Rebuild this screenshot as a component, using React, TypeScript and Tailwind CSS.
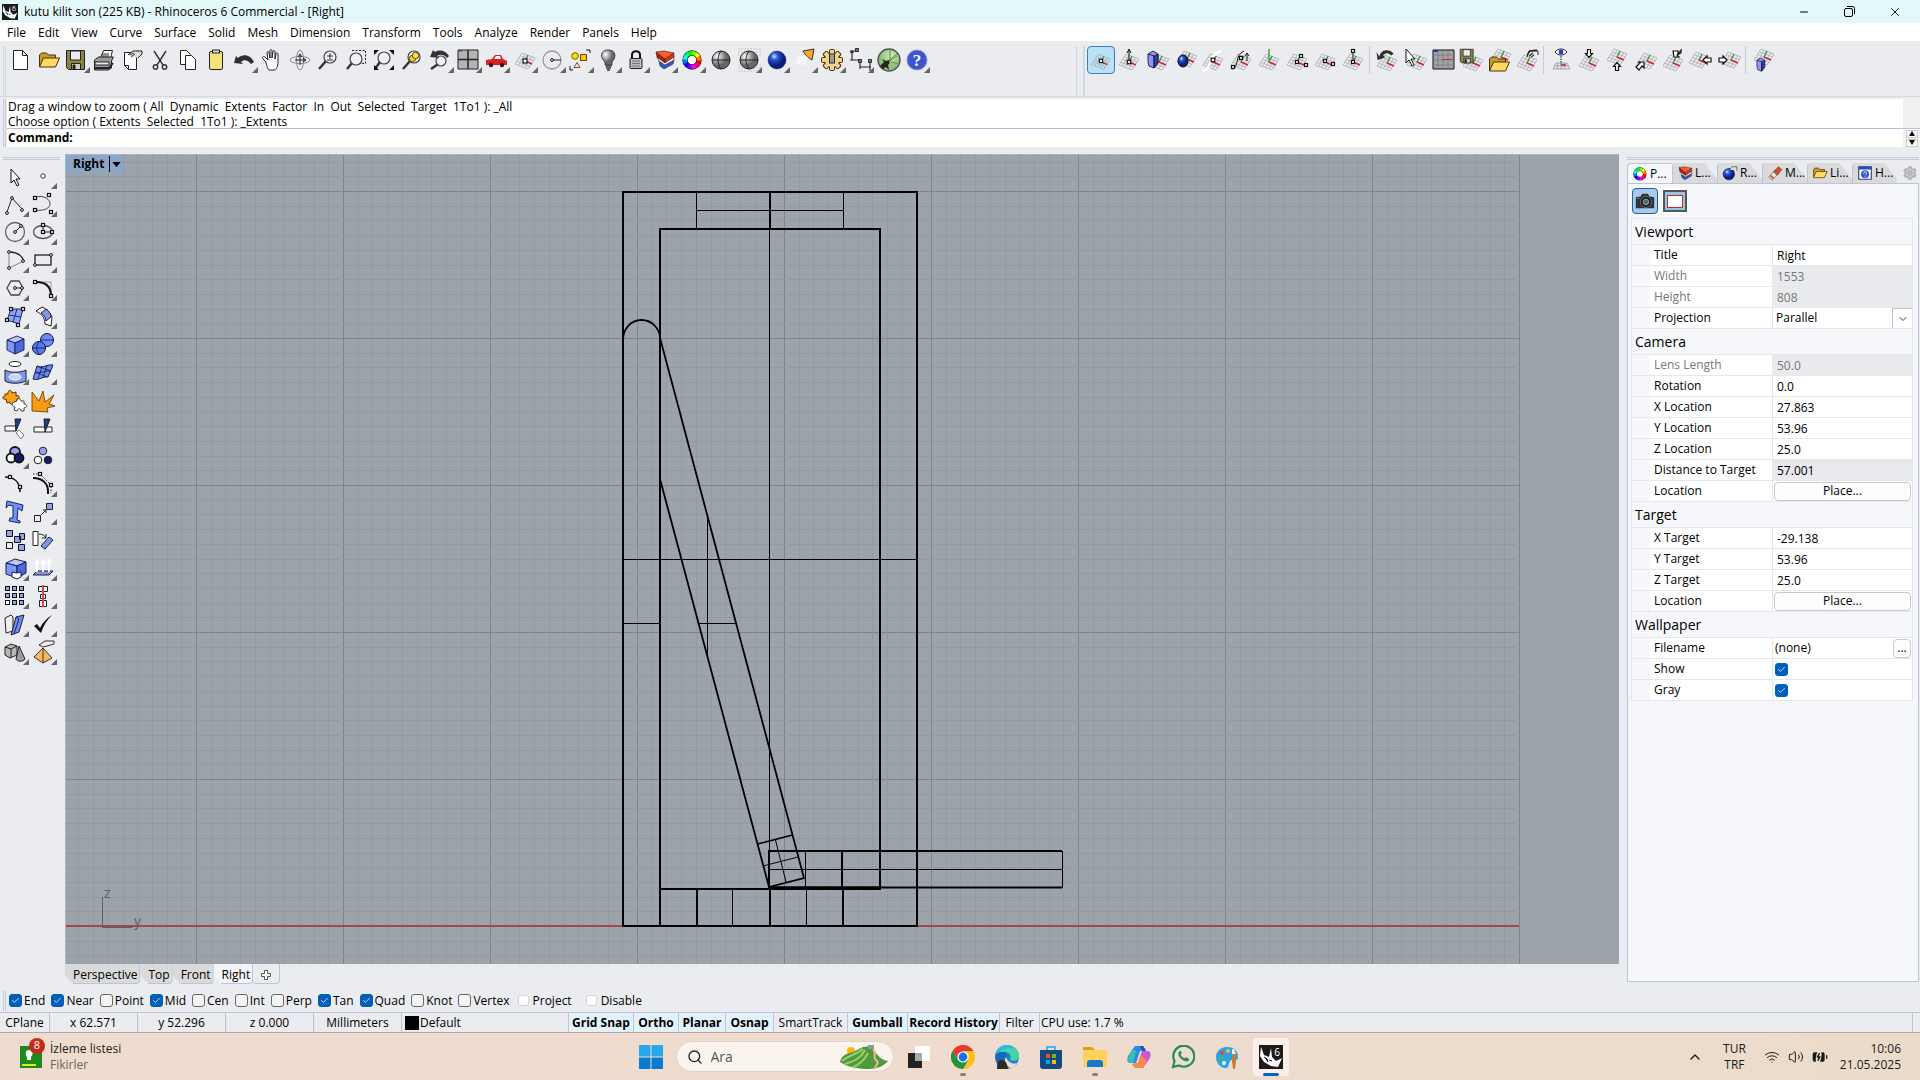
// App.tsx
import type { ReactNode } from 'react'
import { BatteryCharging, Check, ChevronDown, ChevronUp, Minus, Search, Settings, Volume2, Wifi, X } from 'lucide-react'

const menus = [
  'File', 'Edit', 'View', 'Curve', 'Surface', 'Solid', 'Mesh', 'Dimension',
  'Transform', 'Tools', 'Analyze', 'Render', 'Panels', 'Help',
]

/* ---------- shared icon parts (28 x 28 box) ---------- */

function Plane({ dx = 0, dy = 0 }: { dx?: number; dy?: number }) {
  const steps = [0, 1, 2, 3, 4]
  return (
    <g transform={`translate(${dx} ${dy})`}>
      {steps.map((i) => (
        <g key={i} stroke="#a9abb0" strokeWidth="0.8">
          <path d={`M${4 + i * 1.75} ${19 - i * 2.75}l13 5`} />
          <path d={`M${4 + i * 3.25} ${19 + i * 1.25}l7 -11`} />
        </g>
      ))}
      <path d="M14 16l3-6" stroke="#3f9a3f" strokeWidth="1.4" />
      <path d="M14 16l7 3" stroke="#cc2233" strokeWidth="1.6" />
    </g>
  )
}

function Node({ x, y, s = 4 }: { x: number; y: number; s?: number }) {
  return <rect x={x - s / 2} y={y - s / 2} width={s} height={s} fill="#fff" stroke="#111" strokeWidth="1.2" />
}

function Dot({ x, y }: { x: number; y: number }) {
  return <circle cx={x} cy={y} r="1.4" fill="#fff" stroke="#111" strokeWidth="1" />
}

function Wheel({ r = 8 }: { r?: number }) {
  const c = 2 * Math.PI * r
  return (
    <g>
      <circle cx="14" cy="14" r={r} stroke="#222" strokeWidth="5.4" fill="#fff" />
      {Array.from({ length: 12 }, (_, i) => (
        <circle
          key={i}
          cx="14"
          cy="14"
          r={r}
          fill="none"
          stroke={`hsl(${i * 30} 100% 50%)`}
          strokeWidth="4"
          strokeDasharray={`${c / 12 + 0.3} ${c}`}
          transform={`rotate(${-i * 30} 14 14)`}
        />
      ))}
    </g>
  )
}

function Lens({ x = 16, y = 11, r = 6 }: { x?: number; y?: number; r?: number }) {
  return (
    <g>
      <path d={`M${x - r * 0.7} ${y + r * 0.7}L5 23`} stroke="#333" strokeWidth="2.4" />
      <circle cx={x} cy={y} r={r} fill="#f1f2f5" stroke="#444" strokeWidth="1.2" />
    </g>
  )
}

const folder = (
  <g stroke="#4a3200" strokeWidth="1">
    <path d="M5.500 20V9l2-2h5l2 2h7v3" fill="#c99a2a" />
    <path d="M5.500 21l4-9h16l-4 9z" fill="#ffd866" />
  </g>
)
const floppy = (
  <g stroke="#222">
    <path d="M4.500 4.500h18v19h-16l-2-2z" fill="#8d8440" />
    <path d="M8.500 5h10v9h-10z" fill="#e9ebf3" />
    <path d="M9.500 17.500h9v6h-9z" fill="#cfcfcf" />
    <path d="M11 19h2v4h-2z" fill="#222" />
  </g>
)
const layers = (
  <g stroke="#222" strokeWidth="0.6">
    <path d="M9 15l6 4 9-5-1 4-9 5-4-3z" fill="#3557c9" />
    <path d="M7 11l8 5 9-5v3l-9 5-6-4z" fill="#fff" />
    <path d="M6 6l9 7v4l-8-6z" fill="#b81a0c" />
    <path d="M15 13l9-6v4l-9 6z" fill="#e03418" />
    <path d="M6 6l8-1 10 2-9 6z" fill="#ff5a28" />
  </g>
)
const undo = <path d="M7 16C9 8 18 7 23 13l-3 2C17 11 13 12 11 15l3 2-9 3-1-9z" fill="#2f2f2f" />
const hand = <path d="M14 9l3-4 7-1M16 10l4-3M18 11l3-2" stroke="#333" strokeWidth="1.4" />
const cube = (
  <g stroke="#101c60" strokeWidth="0.9">
    <path d="M6 10l10-4 7 3-9 4z" fill="#b9c6fa" />
    <path d="M6 10l8 3v11l-8-4z" fill="#7f97f2" />
    <path d="M14 13l9-4v11l-9 4z" fill="#4c68dd" />
  </g>
)
const prism = (
  <g stroke="#15194a" strokeWidth="0.9">
    <path d="M5 8l5-3 5 3v9l-4 5-5-2-1-4z" fill="#8f97ee" />
    <path d="M11 10l4-2v9l-4 5z" fill="#3a3fa8" />
    <path d="M5 8l6 2v12" />
  </g>
)
const gear = (
  <g>
    {[0, 45, 90, 135].map((a) => (
      <rect key={a} x="11.500" y="3.500" width="5" height="21" rx="1" fill="#f0d48c" stroke="#3c2b08" transform={`rotate(${a} 14 14)`} />
    ))}
    <circle cx="14" cy="14" r="7" fill="#f0d48c" />
    <rect x="11.500" y="8" width="5" height="9" fill="#9a9a9a" stroke="#3c2b08" />
  </g>
)
const arrow = (d: string) => <path d={d} fill="#fff" stroke="#111" strokeWidth="1.2" />

const icons: Record<string, ReactNode> = {
  New: <path d="M7.500 4.500h9l5 5v14h-14zM16.500 4.500v5h5" fill="#fff" stroke="#222" />,
  Open: folder,
  Save: floppy,
  Print: (
    <g stroke="#222">
      <path d="M10.500 12l3-7.500h9l-2 7.500" fill="#fff" />
      <path d="M12 8h7M12 10h7" />
      <path d="M4.500 14l4-3h15l-2 4v7l-3 2h-14z" fill="#9c9c9c" />
      <path d="M5 16h14v3H5z" fill="#eee" />
      <path d="M5 22h14l4-5" strokeWidth="2" />
    </g>
  ),
  'Document properties': (
    <g>
      <path d="M6.500 6.500h12v17h-8l-4-4zM6.500 19.500h4v4" fill="#fff" stroke="#222" />
      <path d="M10 9l5-4h9v3l-4 4" fill="#ddd" stroke="#222" />
      <path d="M12 9l4-2M13 11l4-3" stroke="#333" />
    </g>
  ),
  Cut: (
    <g stroke="#333" strokeWidth="1.4">
      <path d="M8 5l9 14M20 5l-9 14" />
      <circle cx="9.500" cy="21" r="2.200" />
      <circle cx="18.500" cy="21" r="2.200" />
    </g>
  ),
  Copy: (
    <g fill="#fff" stroke="#222">
      <path d="M6.500 4.500h6l4 4v10h-10z" />
      <path d="M11.500 9.500h6l4 4v10h-10z" />
    </g>
  ),
  Paste: (
    <g stroke="#222">
      <rect x="7.500" y="5.500" width="13" height="18" rx="1.500" fill="#f5e27a" />
      <rect x="10.500" y="4" width="7" height="3" fill="#ddd" />
    </g>
  ),
  Undo: <path d="M4 17l2-7 2 2c5-5 13-3 16 4l-3 2c-3-4-7-5-10-2l2 2z" fill="#2f2f2f" />,
  Pan: <path d="M8 16l-3-3c-2-2 1-3 2-2l3 3-1-7c0-2 2-2 2 0l1 5V5c0-2 2-2 2 0v7l1-6c0-2 2-2 2 0v7l1-5c0-2 2-1 2 0v8c0 4-2 8-3 8h-6c-1 0-2-4-3-7z" fill="#fff" stroke="#222" />,
  'Rotate view': (
    <g stroke="#8a8a8a">
      <ellipse cx="14" cy="14" rx="10" ry="3.500" />
      <ellipse cx="14" cy="14" rx="3.500" ry="10" />
      <path d="M14 9v10M9 14h10M12 11l2-3 2 3M17 12l3 2-3 2" stroke="#222" />
    </g>
  ),
  'Zoom dynamic': <g><Lens /><path d="M13 10h6M16 7v6M13 14h6" stroke="#333" /></g>,
  'Zoom window': <g><Lens x={14} y={13} r={6} /><path d="M10 4.500h13.500v13H18" stroke="#222" strokeDasharray="2 1.500" /></g>,
  'Zoom extents': (
    <g>
      <Lens x={14} y={12} />
      <path d="M4 4h5L4 9zM24 4h-5l5 5zM24 24h-5l5-5zM4 24v-5l5 5z" fill="#111" />
    </g>
  ),
  'Zoom selected': <g><Lens /><circle cx="14.500" cy="12.500" r="3.200" fill="#f5d21f" stroke="#5d4a00" /><circle cx="17.500" cy="9.500" r="3.200" fill="#f9e04a" stroke="#5d4a00" /></g>,
  'Undo view': <g><Lens x={15} y={15} r={5} /><path d="M4 11l3-7 2 2c5-3 11-1 14 4l-2 2c-3-4-7-4-10-2l2 2z" fill="#333" /></g>,
  'Four viewports': (
    <g>
      <path d="M4 4h20v19H4z" fill="#b4b4b6" stroke="#222" />
      <path d="M14 4v19M4 13.500h20" stroke="#222" strokeWidth="1.500" />
      <path d="M5 5h3" stroke="#2233aa" />
    </g>
  ),
  'Set view': (
    <g>
      <path d="M4 14l6-1 3-4h6l2 4 4 2v4H4z" fill="#dd1d22" />
      <path d="M12 13l2-3h4l1 3z" fill="#fff" />
      <circle cx="9" cy="19" r="2.200" fill="#222" />
      <circle cx="20" cy="19" r="2.200" fill="#222" />
    </g>
  ),
  'Set CPlane': <g><Plane dx={1} dy={-1} /><Node x={15} y={15} /></g>,
  'Object snap': (
    <g>
      <circle cx="14" cy="14" r="9" stroke="#999" strokeWidth="1.300" />
      <path d="M14 14h9" stroke="#222" />
      <Dot x={14} y={14} />
    </g>
  ),
  Select: (
    <g>
      <circle cx="9" cy="10" r="3.300" fill="#fbe100" stroke="#8a5a00" />
      <path d="M14.500 8.500h6v6h-6z" fill="#fbc900" stroke="#7a3d00" />
      <path d="M8 21.500l3-5 3 5z" stroke="#8a4a22" />
      <path d="M20 4h4v3M4 20v4h3" stroke="#111" />
    </g>
  ),
  Hide: (
    <g>
      <path d="M14 4c9 0 8 8 4 12v3h-7v-3c-5-4-5-12 3-12z" fill="url(#gray)" stroke="#444" />
      <path d="M11.500 20h6M12 22h5M13 24h3" stroke="#333" strokeWidth="1.300" />
    </g>
  ),
  Lock: (
    <g>
      <path d="M10 13V9c0-5 8-5 8 0v4" stroke="#111" strokeWidth="2" />
      <rect x="8" y="12.500" width="12" height="10" rx="1" fill="#bbb" stroke="#222" />
      <path d="M10 15h8M10 17.500h8M10 20h8" stroke="#777" />
    </g>
  ),
  Layers: layers,
  Properties: <Wheel r={7} />,
  Shade: <g><circle cx="15" cy="14" r="9" fill="url(#gray)" stroke="#222" /><path d="M6 14h18M15 5c-4 5-4 13 0 18" stroke="#222" /></g>,
  'Shade selected': (
    <g>
      <path d="M4 3h23M4 6h23M4 9h23M4 19h23M4 22h23M4 25h23" stroke="#c4c5ca" strokeDasharray="2 1" />
      <circle cx="15" cy="14" r="9" fill="url(#gray)" stroke="#222" />
      <path d="M6 14h18M15 5c-4 5-4 13 0 18" stroke="#222" />
    </g>
  ),
  Render: <g><circle cx="15" cy="14" r="9" fill="url(#blue)" stroke="#0a1a60" strokeWidth="0.500" /></g>,
  Lights: <g><path d="M5 17l5-10 8 4-2 9z" fill="#fff" opacity="0.500" /><path d="M13 5l11-2-2 11c-2-1-7-5-9-9z" fill="#f8a630" stroke="#333" /></g>,
  Options: gear,
  Dimension: (
    <g stroke="#222" strokeWidth="1.100">
      <path d="M6 5v9M4 5h8M4 14h10v9M14 21h11M24 16v9M4.500 7L6 5l1.500 2" />
      <Node x={11} y={4} s={2.500} /><Node x={14} y={15} s={2.500} /><Node x={24} y={15} s={2.500} />
    </g>
  ),
  Grasshopper: (
    <g>
      <circle cx="15" cy="14" r="11" fill="url(#green)" stroke="#555" strokeWidth="1.400" />
      <path d="M6 20l4-4-2-3 4 2 3-1 1 3-2 2 1 5-3-3-3 2z" fill="#222" />
      <path d="M15 15l8-5M15 17c3-6 5-8 10-9M16 14V4M17 16l8 2" stroke="#5f8f4a" />
    </g>
  ),
  Help: (
    <g>
      <circle cx="15" cy="14" r="10" fill="#3a55cf" stroke="#8592c8" />
      <text x="15" y="20" textAnchor="middle" fontSize="17" fontWeight="700" fill="#fff" fontFamily="Liberation Serif, serif">?</text>
    </g>
  ),

  // CPlane toolbar
  'Origin': <g><Plane /><Node x={14} y={15} s={3.500} /></g>,
  'Elevation': <g><Plane /><path d="M14 15V4M12 7l2-4 2 4" stroke="#111" /><Node x={14} y={16} s={3.500} /></g>,
  'To object': <g><Plane dx={2} />{prism}</g>,
  'To surface': <g><Plane dx={2} dy={-3} /><ellipse cx="12" cy="15" rx="5" ry="6" fill="url(#blue)" stroke="#111" /></g>,
  'Perpendicular to curve': <g><Plane /><path d="M4 25c10-3 5-17 18-20" stroke="#fff" strokeWidth="2.500" /><Node x={14} y={14} s={3.500} /></g>,
  'To curve': <g><Plane /><path d="M5 23c8-2 2-14 12-18M20 15V7M18 10l2-3 2 3" stroke="#222" /><Node x={14} y={12} s={3} /><Node x={6} y={21} s={3} /></g>,
  'Z axis': <g><Plane /><path d="M14 16V3" stroke="#35b035" strokeWidth="1.500" /></g>,
  '3 points': <g><Plane /><Node x={14} y={16} s={3} /><Node x={18} y={10} s={3} /><Node x={23} y={19} s={3} /></g>,
  'X axis': <g><Plane /><Node x={14} y={15} s={3} /><Node x={22} y={18} s={3} /></g>,
  'Vertical': <g><Plane /><path d="M14 15V6" stroke="#222" /><Node x={14} y={5} s={3} /><Node x={14} y={16} s={3} /></g>,
  'Previous CPlane': <g><Plane dy={1} /><g transform="translate(0 -4) scale(.9)">{undo}</g></g>,
  'Select CPlane': <g><Plane dx={2} /><path d="M5 3v14l3-3 3 6 2-1-3-6h4z" fill="#fff" stroke="#111" /></g>,
  'Match view': (
    <g>
      <path d="M4 4h21v19H4z" fill="#a4a4a8" stroke="#111" />
      <path d="M9 4v19M14 4v19M19 4v19M4 9h21M4 14h21M4 19h21" stroke="#77777c" strokeWidth="0.700" />
      <path d="M13 13.500h11" stroke="#d03040" /><path d="M5 5h4" stroke="#2233cc" strokeWidth="2" />
    </g>
  ),
  'Save CPlane': <g><Plane dx={2} dy={1} /><g transform="scale(.72)">{floppy}</g></g>,
  'Read CPlane': <g><Plane dx={2} dy={-5} /><g transform="translate(-1 4)">{folder}</g></g>,
  'Edit CPlane': <g><Plane dy={1} />{hand}<path d="M14 11l2-6h9v4" stroke="#222" fill="none" /></g>,
  'Plan view': (
    <g>
      <path d="M8 6c3-4 9-4 12 0-3 4-9 4-12 0z" fill="#fff" stroke="#222" /><circle cx="14" cy="6" r="2.400" fill="#2340cc" />
      <path d="M14 10v6" stroke="#222" strokeDasharray="1.500 1" />
      <path d="M6 23h17M7 20h15M9 17h11M9 17l-3 6M14 17v6M20 17l3 6M11 17l-1 6M17 17l1 6" stroke="#a0a2a8" />
      <path d="M14 19h5" stroke="#cc2233" strokeWidth="1.500" /><path d="M14 19v-4" stroke="#3f9a3f" />
    </g>
  ),
  Top: <g><Plane dy={1} />{arrow('M12.500 3.500h3v4h2l-3.500 4-3.500-4h2z')}</g>,
  Bottom: <g><Plane dy={-5} />{arrow('M12.500 24.500h3v-4h2l-3.500-4-3.500 4h2z')}</g>,
  Front: <g><Plane dx={2} dy={-1} />{arrow('M5 21l4-4-2-1h6v6l-2-2-3 4z')}</g>,
  Back: <g><Plane dy={1} />{arrow('M22 4l-3 4 0-3h-5l1 6 5 0-2-2 4-2z')}</g>,
  'Right CPlane': <g><Plane dx={-2} dy={-2} />{arrow('M24 12v4h-4v2l-4-4 4-4v2z')}</g>,
  'Left CPlane': <g><Plane dx={2} dy={-2} />{arrow('M4 12v4h4v2l4-4-4-4v2z')}</g>,
  Mobile: <g><Plane dx={1} dy={-5} /><g transform="translate(4 8) scale(.78)">{prism}</g></g>,

  // main left toolbar
  Pointer: <path d="M10 7v14l3-3 3 6 2-1-3-6h4z" fill="#fff" stroke="#111" />,
  Point: <circle cx="14" cy="14" r="2.200" fill="#fff" stroke="#333" />,
  Polyline: <g><path d="M6 22l5-14 10 11" stroke="#222" /><Dot x={6} y={23} /><Dot x={11} y={8} /><Dot x={21} y={20} /></g>,
  Curve: <g><path d="M6 7c18-4 22 16 0 13" stroke="#444" /><Node x={6} y={8} s={3} /><Node x={6} y={20} s={3} /><Node x={20} y={5} s={3} /><Node x={22} y={22} s={3} /></g>,
  Circle: <g><circle cx="14" cy="14" r="9.500" stroke="#666" strokeWidth="1.300" /><path d="M14 14l6-6" stroke="#222" /><Dot x={14} y={14} /><Dot x={20} y={8} /></g>,
  Ellipse: <g><ellipse cx="14" cy="14" rx="9.500" ry="6.500" stroke="#555" strokeWidth="1.300" /><path d="M14 8v6h9" stroke="#222" /><Node x={14} y={7} s={3} /><Node x={14} y={14} s={3} /><Node x={23} y={14} s={3} /></g>,
  Arc: <g><path d="M8 6c8 0 13 4 15 9" stroke="#222" strokeWidth="1.300" /><path d="M8 6v16l15-7" stroke="#888" /><Dot x={8} y={6} /><Dot x={8} y={22} /><Dot x={22} y={15} /></g>,
  Rectangle: <g><rect x="6" y="9" width="16" height="10" stroke="#222" strokeWidth="1.300" /><Dot x={6} y={19} /><Dot x={22} y={9} /></g>,
  Polygon: <g><path d="M6 14l4-7h8l4 7-4 7h-8z" stroke="#444" strokeWidth="1.300" /><path d="M14 14h7" stroke="#222" /><Dot x={14} y={14} /><Dot x={21} y={14} /></g>,
  Fillet: <g><path d="M6 8h16v14" stroke="#999" /><path d="M7 8c10 0 15 4 15 14" stroke="#111" strokeWidth="2" /><Node x={6} y={8} s={3} /><Node x={22} y={22} s={3} /></g>,
  Surface: (
    <g>
      <path d="M10 7h12l-4 15-12-4z" fill="#8ea3f2" stroke="#1a2a80" />
      <path d="M16 7l-4 13M8 13l12 2" stroke="#1a2a80" />
      <Node x={10} y={7} s={3} /><Node x={22} y={7} s={3} /><Node x={6} y={18} s={3} /><Node x={17} y={23} s={3} />
    </g>
  ),
  'Surface from curves': (
    <g>
      <path d="M7 9l6-4c5 2 8 5 10 10l-1 9-6-2c0-6-3-10-9-13z" fill="#fff" stroke="#222" />
      <path d="M12 11l5-4c3 2 5 5 5 8l-5 4c0-3-2-6-5-8z" fill="#7f97f2" stroke="#222" />
    </g>
  ),
  Box: cube,
  Sphere: <g stroke="#0c1850"><circle cx="18" cy="10" r="6.500" fill="#6f8cf5" /><circle cx="10" cy="18" r="6.500" fill="#5a78ea" /><path d="M4 18h13M10 12c-3 3-3 9 0 12M12 10h12" strokeWidth="0.800" /></g>,
  'Extract surface': (
    <g stroke="#222">
      <ellipse cx="14" cy="6" rx="6" ry="2.500" fill="#fff" />
      <path d="M4 12c5 3 15 3 21 0v11c-6 3-16 3-21 0z" fill="#7f97f2" />
      <ellipse cx="14" cy="19" rx="6" ry="3" fill="#c6d2ff" stroke="#fff" />
    </g>
  ),
  Mesh: <g stroke="#101c60"><path d="M8 8c5 3 10-2 16-1l-5 12c-5-1-9 4-15 2z" fill="#6f8be8" /><path d="M6 14c6 2 10-2 16-1M13 8l-4 13M18 7l-4 13M8 8l14 5M6 14l12 5" strokeWidth="0.800" /></g>,
  Join: (
    <g>
      <path d="M4 8l3 0c-1-4 4-5 4-1l4-1 0 4c4-2 4 3 1 3l0 3-3 0c0 3-5 3-4 0l-3 1-1-4c-4 1-4-3-1-3z" fill="#f6a21a" stroke="#5a3500" />
      <path d="M13 16l3-1c-1-3 4-3 4 0l3 0 0 3c4 0 3 4 0 4l0 3-3 0c0-3-4-3-4 0l-3-1 1-3c-3 0-4-4-1-5z" fill="#fff" stroke="#444" />
    </g>
  ),
  Explode: <path d="M3 25V6l7 9 4-10 2 11 9-7-5 9 6 2-8 2 1 4z" fill="#f79a14" stroke="#5a3500" strokeWidth="0.800" />,
  Trim: <g stroke="#222"><path d="M4 12h11v5H4z" fill="#fff" /><path d="M15 19l3-3 5 5-3 4z" fill="#fff" stroke="#777" /><path d="M14 5h6l-5 12z" fill="#1f3c8e" /></g>,
  Split: <g stroke="#222"><path d="M5 13h18v5H5z" fill="#fff" /><path d="M15 5h6l-5 13z" fill="#1f3c8e" /></g>,
  Group: <g stroke="#111" strokeWidth="1.800"><circle cx="14" cy="10" r="5" fill="#9aa0ef" /><circle cx="10" cy="16" r="4.500" fill="#fff" /><circle cx="18" cy="16" r="4.500" fill="#17186e" /></g>,
  Ungroup: <g stroke="#222"><circle cx="14" cy="9" r="3.800" fill="#9aa0ef" /><circle cx="9" cy="18" r="3.800" fill="#fff" /><circle cx="19" cy="18" r="3.800" fill="#17186e" /></g>,
  'Edit points': <g><path d="M4 7c9 0 15 5 15 15" stroke="#111" strokeWidth="1.600" /><Node x={9} y={7} s={3} /><Node x={19} y={17} s={3} /></g>,
  'Control points': <g><path d="M4 8c9 0 16 5 15 16" stroke="#111" strokeWidth="2" /><path d="M4 4h7l11 11v8" stroke="#222" strokeDasharray="1.500 1.500" /><Node x={11} y={4} s={3} /><Node x={22} y={15} s={3} /></g>,
  Text: <path d="M6 3l16 4-1 6-4-3-1 12 3 1v2l-11-2 1-3 3 0v-12l-4-1-3 3z" fill="#7290f4" stroke="#14246e" />,
  Move: <g stroke="#222"><path d="M5.500 17.500h6v6h-6z" fill="#eee" /><path d="M17.500 5.500h6v6h-6z" fill="#8ea3f2" /><path d="M12 17l5-5M14 12h3v3" /></g>,
  Copies: <g stroke="#111"><path d="M5.500 4.500h6v6h-6zM18.500 7.500h5v6h-5zM13.500 10.500h6v6h-6zM17.500 18.500h6v6h-6z" fill="#8ea3f2" /><path d="M5.500 16.500h6v6h-6z" fill="#eee" /></g>,
  Rotate: <g stroke="#222"><path d="M4 5.500h5v14H4z" fill="#fff" /><path d="M12 20l8-9 4 3-8 9z" fill="#7f97f2" /><path d="M10 8c4 0 6 2 7 4M17 8v4h-4" /></g>,
  'Solid edit': <g stroke="#101c60"><path d="M5 9l9-4 11 3-9 4z" fill="#b9c6fa" /><path d="M5 9l11 3v12L5 20z" fill="#7f97f2" /><path d="M16 12l9-4v11l-9 5z" fill="#4c68dd" /><path d="M11 18l5 1 4-1v5l-4 2-5-2z" fill="#fff" /></g>,
  Extrude: <g><path d="M4 21l4-4h16l-4 4z" fill="#7f97f2" stroke="#222" /><path d="M8 18V8M14 18V8M20 18V8M6 10l2-4 2 4M12 10l2-4 2 4M18 10l2-4 2 4" stroke="#fff" strokeWidth="1.800" /></g>,
  Array: (
    <g stroke="#111">
      {[4.5, 11.5, 18.5].map((y) => [4.5, 11.5, 18.5].map((x) => <rect key={`${x}-${y}`} x={x} y={y} width="4" height="4" fill={y > 18 && x < 5 ? '#fff' : '#8ea3f2'} />))}
    </g>
  ),
  Align: <g stroke="#222"><path d="M9.500 4.500h9v5h-9zM11.500 12.500h5v4h-5zM10.500 18.500h7v6h-7z" fill="#fff" /><path d="M14 3v22" stroke="#d8474f" strokeWidth="2" /></g>,
  'Set points': <g stroke="#222"><path d="M4 8l6-3 2 2v14l-7 2z" fill="#eee" /><path d="M15 7l8-2-5 17-8 3z" fill="#6f8cf5" /><path d="M15 7l3 2-5 15" stroke="#14246e" /></g>,
  Check: <path d="M5 16l3-2 3 4c3-6 7-10 12-13-5 5-9 11-11 18z" fill="#111" />,
  Primitives: <g stroke="#222"><path d="M4 9l6-3 6 2v9l-7 3-5-3z" fill="#b7b7b7" /><path d="M4 9l6 2 6-3M10 11v9" /><path d="M18 8l6 13c-2 3-8 3-9 0z" fill="#9d9d9d" /></g>,
  Analyze: <g stroke="#333"><path d="M14 10l9 10-9 5-9-6z" fill="#f4b95a" /><path d="M14 10v15" /><path d="M10 7l6-4h9v3l-7 2-4 1z" fill="#eee" /></g>,
}

const standardTools: [string, boolean][] = [
  ['New', false], ['Open', false], ['Save', true], ['Print', false], ['Document properties', false],
  ['Cut', false], ['Copy', false], ['Paste', false], ['Undo', true], ['Pan', false],
  ['Rotate view', false], ['Zoom dynamic', false], ['Zoom window', false], ['Zoom extents', false],
  ['Zoom selected', false], ['Undo view', true], ['Four viewports', true], ['Set view', true],
  ['Set CPlane', true], ['Object snap', true], ['Select', true], ['Hide', true], ['Lock', true],
  ['Layers', true], ['Properties', true], ['Shade', false], ['Shade selected', true],
  ['Render', true], ['Lights', true], ['Options', true], ['Dimension', true],
  ['Grasshopper', false], ['Help', true],
]

const cplaneTools = [
  ['Origin', 'Elevation', 'To object', 'To surface', 'Perpendicular to curve', 'To curve', 'Z axis', '3 points', 'X axis', 'Vertical'],
  ['Previous CPlane', 'Select CPlane', 'Match view', 'Save CPlane', 'Read CPlane', 'Edit CPlane'],
  ['Plan view', 'Top', 'Bottom', 'Front', 'Back', 'Right CPlane', 'Left CPlane'],
  ['Mobile'],
]

const noFlyout = ['Pointer', 'Join', 'Explode', 'Trim', 'Split', 'Ungroup', 'Edit points', 'Text', 'Copies', 'Rotate']
const sideTools = [
  'Pointer', 'Point', 'Polyline', 'Curve', 'Circle', 'Ellipse', 'Arc', 'Rectangle', 'Polygon', 'Fillet',
  'Surface', 'Surface from curves', 'Box', 'Sphere', 'Extract surface', 'Mesh', 'Join', 'Explode',
  'Trim', 'Split', 'Group', 'Ungroup', 'Edit points', 'Control points', 'Text', 'Move', 'Copies', 'Rotate',
  'Solid edit', 'Extrude', 'Array', 'Align', 'Set points', 'Check', 'Primitives', 'Analyze',
]

function Tool({ name, flyout = false, active = false }: { name: string; flyout?: boolean; active?: boolean }) {
  return (
    <button
      aria-label={name}
      className={active ? 'size-7 shrink-0 rounded border border-[#3c7fb1] bg-[#b9e2f8]' : 'size-7 shrink-0'}
    >
      <svg viewBox="0 0 28 28" fill="none" className="size-full">
        {icons[name]}
        {flyout && <path d="M28 21v6h-6z" fill="#666" />}
      </svg>
    </button>
  )
}

function RhinoLogo({ className }: { className: string }) {
  return (
    <svg viewBox="0 0 24 24" className={className}>
      <rect width="24" height="24" fill="#1b1b1b" />
      <path d="M2 2l3 8 5 2 2-9 1 9 4 4 6-3-4 9-7-1-7-4-4-6z" fill="#fff" />
      <path d="M10 15l3 1M5 12l3 2 1 3" stroke="#1b1b1b" />
      <text x="18" y="11" textAnchor="middle" fontSize="10" fill="#fff">6</text>
    </svg>
  )
}

/* ---------- viewport ---------- */

const CELL = 14.7
const ORIGIN_X = 1453.5
const ORIGIN_Y = 771.5

function Drawing() {
  return (
    <svg className="absolute inset-0 size-full" fill="none">
      {/* construction grid */}
      <g shapeRendering="crispEdges">
        {Array.from({ length: 99 }, (_, i) => (
          <path key={i} d={`M${ORIGIN_X - i * CELL} 0v2000`} stroke={i % 10 ? '#929aa3' : '#7c848d'} />
        ))}
        {Array.from({ length: 57 }, (_, i) => i - 4).map((i) => (
          <path key={i} d={`M0 ${ORIGIN_Y - i * CELL}H${ORIGIN_X}`} stroke={i % 10 ? '#929aa3' : '#7c848d'} />
        ))}
      </g>
      <path d="M0 771H1453" stroke="#a04a4a" strokeWidth="2" />

      {/* world axis icon */}
      <path d="M36.500 742v30.500h30" stroke="#5b6067" />
      <text x="38" y="743" fontSize="14" fill="#5b6067">z</text>
      <text x="68" y="771" fontSize="14" fill="#5b6067">y</text>

      {/* thin surface lines */}
      <g stroke="#000" strokeWidth="1">
        <path d="M630.500 37v36M777.500 37v36M630.500 55.500h147M703.500 37v697" />
        <path d="M556 404.500h295M556 468.500h37M632 468.500h39M641.500 363v137" />
        <path d="M666.500 734v37M740.500 734v37M739.500 696v36M703 714.500h293M996.500 696v37" />
        <path d="M709.500 685l10.500 42M697 711l35-9" />
      </g>

      {/* edges */}
      <g stroke="#000" strokeWidth="2">
        <path d="M557 37h294v734H557zM594 771V74h220v660H594" />
        <path d="M704 37v37M631 734v37M704 734v37M777 734v37M776 696v37" />
        <path d="M557 185c0-10 7-20 18.500-20s18.500 10 18.500 18L738 723l-35 9L594 324" strokeWidth="1.800" />
        <path d="M691.500 689l35-9" strokeWidth="1.800" />
        <path d="M996 696H703v36.500h293" />
        <path d="M703 733h111" strokeWidth="3" />
      </g>
    </svg>
  )
}

function Viewport() {
  return (
    <section className="relative flex-1 overflow-hidden border-t border-l border-[#aab4cc] bg-[#9da3ab]">
      <Drawing />
      <button className="relative flex h-[18px] items-center gap-[5px] bg-[#8ba6c6] pr-[2px] pl-[7px] text-xs font-bold">
        Right
        <span className="flex h-4 items-center border-l border-black pl-[2px]">
          <svg viewBox="0 0 10 6" className="h-[5px] w-[9px]"><path d="M0 0h10L5 6z" /></svg>
        </span>
      </button>
    </section>
  )
}

/* ---------- properties panel ---------- */

type Prop = { label: string; value?: string; kind?: 'text' | 'off' | 'locked' | 'select' | 'place' | 'file' | 'check' }

const sections: { title: string; props: Prop[] }[] = [
  {
    title: 'Viewport',
    props: [
      { label: 'Title', value: 'Right' },
      { label: 'Width', value: '1553', kind: 'off' },
      { label: 'Height', value: '808', kind: 'off' },
      { label: 'Projection', value: 'Parallel', kind: 'select' },
    ],
  },
  {
    title: 'Camera',
    props: [
      { label: 'Lens Length', value: '50.0', kind: 'off' },
      { label: 'Rotation', value: '0.0' },
      { label: 'X Location', value: '27.863' },
      { label: 'Y Location', value: '53.96' },
      { label: 'Z Location', value: '25.0' },
      { label: 'Distance to Target', value: '57.001', kind: 'locked' },
      { label: 'Location', kind: 'place' },
    ],
  },
  {
    title: 'Target',
    props: [
      { label: 'X Target', value: '-29.138' },
      { label: 'Y Target', value: '53.96' },
      { label: 'Z Target', value: '25.0' },
      { label: 'Location', kind: 'place' },
    ],
  },
  {
    title: 'Wallpaper',
    props: [
      { label: 'Filename', value: '(none)', kind: 'file' },
      { label: 'Show', kind: 'check' },
      { label: 'Gray', kind: 'check' },
    ],
  },
]

function Tick({ id, checked }: { id: string; checked: boolean }) {
  return (
    <span className="grid size-[13px] shrink-0 place-items-center">
      <input
        id={id}
        type="checkbox"
        defaultChecked={checked}
        className="peer size-[13px] appearance-none rounded-[3px] border border-[#666] bg-[#f4f4f4] [grid-area:1/1] checked:border-[#005fb8] checked:bg-[#005fb8]"
      />
      <Check className="pointer-events-none invisible size-[9px] text-white [grid-area:1/1] peer-checked:visible" />
    </span>
  )
}

function PropValue({ id, prop }: { id: string; prop: Prop }) {
  switch (prop.kind) {
    case 'select':
      return (
        <span className="relative flex h-5 w-full">
          <select id={id} className="w-full appearance-none bg-white pl-[3px]">
            <option>{prop.value}</option>
          </select>
          <span className="pointer-events-none absolute inset-y-0 right-0 flex w-5 items-center justify-center border-t border-l border-[#c4c4c8] bg-white">
            <ChevronDown className="size-3 text-[#444]" />
          </span>
        </span>
      )
    case 'place':
      return <button id={id} className="mx-px h-[19px] w-full rounded border border-[#c9c9cd] bg-[#fdfdfd] leading-none">Place...</button>
    case 'file':
      return (
        <>
          <input id={id} defaultValue={prop.value} className="w-0 flex-1 pl-[2px]" />
          <button aria-label="Browse" className="mr-px h-[19px] w-[18px] shrink-0 rounded border border-[#c9c9cd] bg-[#fdfdfd] leading-none">...</button>
        </>
      )
    case 'check':
      return <span className="pl-[2px]"><Tick id={id} checked /></span>
    default:
      return (
        <input
          id={id}
          defaultValue={prop.value}
          readOnly={prop.kind !== undefined}
          className={
            prop.kind === 'off' ? 'h-5 w-full bg-[#e9eaee] pl-1 text-[#777]'
            : prop.kind === 'locked' ? 'h-5 w-full bg-[#e9eaee] pl-1'
            : 'h-5 w-full bg-white pl-1'
          }
        />
      )
  }
}

const panelTabs: { label: string; icon: ReactNode }[] = [
  { label: 'P...', icon: <g transform="translate(-3 -3) scale(1.2)"><Wheel r={7} /></g> },
  { label: 'L...', icon: <g transform="translate(-4 -3) scale(1.25)">{layers}</g> },
  { label: 'R...', icon: <g><circle cx="12" cy="16" r="10" fill="url(#blue)" stroke="#0a1a60" />{hand}<path d="M13 8l5-5h8v7" stroke="#222" fill="#ddd" /></g> },
  { label: 'M...', icon: <g stroke="#444"><path d="M3 21l11-12 6 5L9 26z" fill="#eee" /><path d="M11 12l9-9 6 5-8 10z" fill="#d9482c" /><path d="M6 18l6 6" stroke="#d9482c" strokeWidth="3" /></g> },
  { label: 'Li...', icon: <g transform="translate(-4 -3) scale(1.2)">{folder}</g> },
  { label: 'H...', icon: <g><path d="M3 3h22v22H3z" fill="#fff" stroke="#2a3f9c" strokeWidth="2" /><path d="M3 3h22v5H3z" fill="#2f49b8" /><circle cx="14" cy="16" r="7" fill="#3a55cf" /><path d="M11.500 15c0-4 6-4 5 0-1 2-2 2-2 3M14.500 20v2" stroke="#fff" strokeWidth="1.600" /></g> },
]

function PropertiesPanel() {
  return (
    <aside className="flex w-[301px] shrink-0 flex-col pr-px pb-[7px] pl-2">
      <div className="mt-[3px] h-[3px] border-y border-[#c3c9dc]" />
      <div className="mt-[3px] flex h-5 items-end">
        {panelTabs.map((tab, i) => (
          <button
            key={tab.label}
            className={
              i === 0
                ? 'flex h-5 w-[45px] items-center gap-[2px] rounded-tl border-t border-l border-[#bcc4dc] bg-[#f6f7fa] pl-1 text-xs'
                : 'flex h-5 w-[45px] items-center gap-[2px] rounded-tl border-l border-[#bcc4dc] bg-[#dadada] pl-1 text-xs [clip-path:polygon(0_0,72%_0,100%_80%,100%_100%,0_100%)]'
            }
          >
            <svg viewBox="0 0 28 28" fill="none" className="size-4 shrink-0">{tab.icon}</svg>
            {tab.label}
          </button>
        ))}
        <button aria-label="Panel options" className="ml-[6px] flex h-5 items-center">
          <Settings className="size-[14px] text-[#b5b5b5]" strokeWidth={4} />
        </button>
      </div>

      <div className="flex-1 border border-[#bcc4dc] bg-[#f6f7fa] px-[3px] pt-1">
        <div className="flex gap-1 pl-px">
          <button aria-label="Viewport properties" className="flex size-[26px] items-center justify-center rounded border border-[#1a62a5] bg-[#a9cbea]">
            <svg viewBox="0 0 24 24" className="size-[22px]">
              <path d="M2 8l5-1 2-3h6l2 3 5 1v12H2z" fill="#2e3338" />
              <circle cx="13" cy="13" r="6" fill="#1a1d20" stroke="#69737a" />
              <circle cx="13" cy="13" r="3" fill="#4d7068" stroke="#9aa" />
              <path d="M3 9h3" stroke="#888" />
            </svg>
          </button>
          <button aria-label="Display properties" className="flex size-[26px] items-center justify-center rounded bg-white">
            <span className="flex h-[22px] w-6 items-center justify-center border-2 border-[#555] bg-[#8ccbe8]">
              <span className="h-[13px] w-4 border border-[#e02020] bg-white" />
            </span>
          </button>
        </div>

        <form className="mt-1 mr-[2px] border-x border-t border-[#e6e7ec] text-xs">
          {sections.map((section) => (
            <fieldset key={section.title} className="min-w-0">
              <legend className="h-[26px] w-full border-b border-[#e6e7ec] pl-[3px] text-sm leading-[25px]">{section.title}</legend>
              {section.props.map((prop) => {
                const id = `${section.title}-${prop.label}`
                return (
                  <div key={id} className="flex h-[21px] items-stretch border-b border-[#e6e7ec]">
                    <div className="w-[18px] shrink-0" />
                    <label
                      htmlFor={id}
                      className={
                        prop.kind === 'off'
                          ? 'w-[123px] shrink-0 border-r border-[#e6e7ec] bg-white pl-1 leading-5 text-[#777]'
                          : 'w-[123px] shrink-0 border-r border-[#e6e7ec] bg-white pl-1 leading-5'
                      }
                    >
                      {prop.label}
                    </label>
                    <div className="flex min-w-0 flex-1 items-center bg-white">
                      <PropValue id={id} prop={prop} />
                    </div>
                  </div>
                )
              })}
            </fieldset>
          ))}
        </form>
      </div>
    </aside>
  )
}

/* ---------- bottom bars ---------- */

const snaps: [string, boolean][] = [
  ['End', true], ['Near', true], ['Point', false], ['Mid', true], ['Cen', false], ['Int', false],
  ['Perp', false], ['Tan', true], ['Quad', true], ['Knot', false], ['Vertex', false],
]

function OsnapBar() {
  return (
    <div className="flex h-[23px] items-center gap-[6px] pl-[3px] text-xs">
      <div className="-mr-[3px] h-5 w-[3px] border-x border-[#c3c9dc]" />
      {snaps.map(([label, on]) => (
        <span key={label} className="flex items-center gap-[2px]">
          <Tick id={`snap-${label}`} checked={on} />
          <label htmlFor={`snap-${label}`}>{label}</label>
        </span>
      ))}
      {['Project', 'Disable'].map((label) => (
        <span key={label} className="flex items-center gap-1 pr-[6px] pl-[2px]">
          <input id={label} type="checkbox" className="size-[11px] appearance-none rounded-[3px] border border-[#d4d4d8] bg-white" />
          <label htmlFor={label}>{label}</label>
        </span>
      ))}
    </div>
  )
}

function StatusBar() {
  const cell = 'flex items-center justify-center border-r border-[#bcc4dc]'
  const on = 'flex items-center justify-center border-r border-[#bcc4dc] bg-[#e3f1fb] font-bold'
  return (
    <div className="flex h-[21px] border-y border-t-[#bcc4dc] border-b-[#b3a8a8] text-xs whitespace-nowrap">
      <button className={`${cell} w-[50px]`}>CPlane</button>
      <div className={`${cell} w-[88px]`}>x 62.571</div>
      <div className={`${cell} w-[88px]`}>y 52.296</div>
      <div className={`${cell} w-[88px]`}>z 0.000</div>
      <button className={`${cell} w-[88px]`}>Millimeters</button>
      <button className="flex w-[167px] items-center gap-px border-r border-[#bcc4dc] pl-[3px]">
        <span className="size-[14px] bg-black" />
        Default
      </button>
      <button className={`${on} w-[65px]`}>Grid Snap</button>
      <button className={`${on} w-[45px]`}>Ortho</button>
      <button className={`${on} w-[47px]`}>Planar</button>
      <button className={`${on} w-[48px]`}>Osnap</button>
      <button className={`${cell} w-[74px]`}>SmartTrack</button>
      <button className={`${on} w-[60px]`}>Gumball</button>
      <button className={`${on} w-[92px]`}>Record History</button>
      <button className={`${cell} w-[40px]`}>Filter</button>
      <div className="mr-[7px] flex flex-1 items-center border-r border-[#bcc4dc] pl-px">CPU use: 1.7 %</div>
    </div>
  )
}

const apps: { name: string; running?: boolean; icon: ReactNode }[] = [
  { name: 'Task view', icon: <g><path d="M1 8h14v15H1z" fill="#222" /><path d="M8 1h15v15H8z" fill="#fff" /><path d="M8 8h7v8H8z" fill="#aaa" /></g> },
  {
    name: 'Chrome',
    running: true,
    icon: (
      <g>
        <circle cx="12" cy="12" r="12" fill="#fbc116" />
        <path d="M1.600 6A12 12 0 0 1 22.400 6H12L7 15z" fill="#e33b2e" />
        <path d="M1.600 6A12 12 0 0 0 12 24l5.200-9H7z" fill="#229342" />
        <circle cx="12" cy="12" r="5.600" fill="#fff" />
        <circle cx="12" cy="12" r="4.400" fill="#1a73e8" />
      </g>
    ),
  },
  {
    name: 'Edge',
    icon: (
      <g>
        <circle cx="12" cy="12" r="12" fill="#1585d0" />
        <path d="M1 9C4-3 24-2 24 11c0 6-9 6-9 3 3-4-3-10-14-5z" fill="#46d3a5" />
        <path d="M4 3c5-5 13-3 16 1-5-2-12-1-19 6z" fill="#2fb6e8" />
        <path d="M11 12c1 4 6 8 11 6-3 6-9 7-14 5-4-3-3-9 3-11z" fill="#efdccf" />
        <path d="M1 9c8-5 12-1 11 2-4 3-2 9 3 12-8 3-16-4-14-14z" fill="#1668b5" />
        <path d="M2 24c0-6 1-9 5-9s5 4 6 9z" fill="#2b2b2b" />
      </g>
    ),
  },
  {
    name: 'Microsoft Store',
    icon: (
      <g>
        <path d="M8 6V2h8v4" fill="none" stroke="#3cbdf0" strokeWidth="2" />
        <path d="M1 5h22v16a3 3 0 0 1-3 3H4a3 3 0 0 1-3-3z" fill="#124a82" />
        <path d="M7 9h4v4H7z" fill="#f25022" /><path d="M13 9h4v4h-4z" fill="#7fba00" />
        <path d="M7 15h4v4H7z" fill="#00a4ef" /><path d="M13 15h4v4h-4z" fill="#ffb900" />
      </g>
    ),
  },
  { name: 'File Explorer', running: true, icon: <g><path d="M0 2h9l3 3v7H0z" fill="#e0a012" /><path d="M0 5h24v17H0z" fill="#ffd05a" /><path d="M4 22v-4a3 3 0 0 1 3-3h10a3 3 0 0 1 3 3v4z" fill="#1a78cc" /></g> },
  {
    name: 'Copilot',
    icon: (
      <g>
        <path d="M8 1h8l3 4-6 1-4 12H3c-3 0-3-4-2-7z" fill="#2a8be8" />
        <path d="M2 11l3-7 4 2-3 12H3c-3-1-2-5-1-7z" fill="#37c0b0" />
        <path d="M16 23H8l-3-4 6-1 4-12h6c3 0 3 4 2 7z" fill="#c659d8" />
        <path d="M16 23H8l-3-4 6-1 3-8 6 6z" fill="#fa8a4a" />
        <path d="M16 1l3 5-4 0-2-5z" fill="#2450c8" />
      </g>
    ),
  },
  {
    name: 'WhatsApp',
    icon: (
      <g fill="none" stroke="#1f8f55" strokeWidth="2.200">
        <path d="M2 22l1.500-6A10.500 10.500 0 1 1 8 20.500z" />
        <path d="M8 7c-2 4 4 10 9 9l1-2-3-1.500-1.500 1C11 12.500 10 11 9.500 9.500l1-1.500L9.500 6z" fill="#1f8f55" strokeWidth="0.500" />
      </g>
    ),
  },
  {
    name: 'Paint',
    icon: (
      <g>
        <path d="M12 2c8 0 11 5 11 10 0 4-3 3-6 3-4 0-2 8-6 8C5 23 1 18 1 12S6 2 12 2z" fill="#2aa4e4" />
        <circle cx="7" cy="8" r="2" fill="#e8453a" /><circle cx="13" cy="6" r="2" fill="#f6c02c" />
        <circle cx="5" cy="14" r="2" fill="#51b848" /><circle cx="9" cy="18" r="2" fill="#fff" />
        <path d="M17 9h4v7l-1 8h-2l-1-8z" fill="#c57b3a" /><path d="M17 4l2 0 2 5h-4z" fill="#eee" />
      </g>
    ),
  },
]

function Taskbar() {
  return (
    <footer className="flex h-[47px] bg-linear-to-r from-[#f0dccf] via-[#efdccf] to-[#ebdcca] text-xs">
      <button className="flex flex-1 items-center gap-2 pl-5 text-left">
        <span className="relative">
          <svg viewBox="0 0 22 22" className="size-[22px]">
            <path d="M0 0h22v22H0z" fill="#1c8a1c" />
            <path d="M2 18h14v2H2z" fill="#d9f01a" />
            <path d="M9 4c5 0 4 5 2 7v3H7v-3C5 9 5 4 9 4z" fill="#fff" />
          </svg>
          <span className="absolute -top-2 left-[9px] flex size-4 items-center justify-center rounded-full bg-[#c42b1c] text-[11px] text-white">8</span>
        </span>
        <span className="leading-4 text-[#222]">
          İzleme listesi
          <br />
          <span className="text-[#666]">Fikirler</span>
        </span>
      </button>

      <nav className="flex items-center">
        <button aria-label="Start" className="flex w-11 justify-center">
          <svg viewBox="0 0 24 24" className="size-6">
            <path d="M0 0h11.500v11.500H0zM12.500 0H24v11.500H12.500z" fill="#28a8ea" />
            <path d="M0 12.500h11.500V24H0zM12.500 12.500H24V24H12.500z" fill="#0a7cd0" />
          </svg>
        </button>
        <label className="mx-[3px] flex h-[31px] w-[218px] items-center gap-2 rounded-full border border-[#e2d3c8] bg-[#faf4ef] pr-1 pl-[10px]">
          <Search className="size-4 shrink-0 text-[#222]" />
          <input aria-label="Ara" placeholder="Ara" className="min-w-0 flex-1 text-sm placeholder:text-[#555]" />
          <svg viewBox="0 0 50 26" className="h-[26px] w-[50px] shrink-0">
            <circle cx="12" cy="7" r="4" fill="#f8b816" />
            <path d="M1 18C4 8 12 10 16 7l8-4 8-1c4 5 8 14 17 15-4 5-11 8-19 8-9 0-20-1-29-7z" fill="#4f9a3c" />
            <path d="M3 17c7-6 14-6 21-12M6 20c9-3 15-5 20-14M14 23c8-3 12-8 15-14" stroke="#9bd06a" strokeWidth="2" fill="none" />
            <path d="M34 5c5 5-2 8 4 12 3 3-3 5-2 8" stroke="#f0b98a" strokeWidth="2" fill="none" />
            <path d="M29 5V1h6v4z" fill="#8a97a5" />
          </svg>
        </label>
        {apps.map((app) => (
          <button key={app.name} aria-label={app.name} className="relative flex h-full w-11 items-center justify-center">
            <svg viewBox="0 0 24 24" className="size-6">{app.icon}</svg>
            {app.running && <span className="absolute bottom-1 h-[3px] w-[6px] rounded-full bg-[#8a7f79]" />}
          </button>
        ))}
        <button aria-label="Rhinoceros 6" className="relative mx-1 flex h-[38px] w-9 items-center justify-center rounded bg-[#faf0e9]">
          <RhinoLogo className="size-6" />
          <span className="absolute bottom-0 h-[3px] w-4 rounded-full bg-[#0067c0]" />
        </button>
      </nav>

      <div className="flex flex-1 items-center justify-end pr-[19px] text-[#1a1a1a]">
        <button aria-label="Show hidden icons"><ChevronUp className="size-4" /></button>
        <button className="ml-5 text-center leading-4">TUR<br />TRF</button>
        <button aria-label="Network, volume and battery" className="ml-[18px] flex items-center gap-2">
          <Wifi className="size-4" strokeWidth={1.5} />
          <Volume2 className="size-4" strokeWidth={1.5} />
          <BatteryCharging className="size-4" fill="#1a1a1a" />
        </button>
        <button className="ml-3 text-right leading-4">10:06<br />21.05.2025</button>
      </div>
    </footer>
  )
}

const viewTabs = ['Perspective', 'Top', 'Front', 'Right']

export default function App() {
  return (
    <div className="flex min-h-screen flex-col bg-[#ebecf0] font-['Open_Sans','Noto_Sans',sans-serif] text-black">
      <svg className="absolute size-0">
        <defs>
          <radialGradient id="gray" cx="0.3" cy="0.3"><stop stopColor="#fff" /><stop offset="1" stopColor="#666" /></radialGradient>
          <radialGradient id="blue" cx="0.35" cy="0.3"><stop stopColor="#cfe0ff" /><stop offset="0.4" stopColor="#2a56d8" /><stop offset="1" stopColor="#0a1f7a" /></radialGradient>
          <radialGradient id="green" cx="0.6" cy="0.3"><stop stopColor="#d2eab8" /><stop offset="1" stopColor="#8fbf75" /></radialGradient>
        </defs>
      </svg>

      {/* Title bar */}
      <header className="flex h-[23px] items-center bg-[#e3f8f8] pl-[2px]">
        <RhinoLogo className="size-4" />
        <h1 className="ml-[6px] flex-1 text-xs">kutu kilit son (225 KB) - Rhinoceros 6 Commercial - [Right]</h1>
        <button aria-label="Minimize" className="flex w-[46px] justify-center"><Minus className="size-3" /></button>
        <button aria-label="Restore" className="flex w-[45px] justify-center">
          <svg viewBox="0 0 12 12" fill="none" stroke="#000" className="size-3">
            <rect x="0.500" y="2.500" width="8" height="8" rx="1.500" />
            <path d="M3 .5h5.500a2 2 0 0 1 2 2V8" />
          </svg>
        </button>
        <button aria-label="Close" className="mr-[2px] flex w-[46px] justify-center"><X className="size-[14px]" strokeWidth={1.5} /></button>
      </header>

      <nav className="flex h-[18px] items-center gap-3 bg-white pt-[2px] pl-[7px] text-xs">
        {menus.map((menu) => (
          <button key={menu}>{menu}</button>
        ))}
      </nav>

      {/* Toolbars */}
      <div className="flex h-14 border-b border-[#d3d7e3] pt-[5px]">
        <div className="ml-[3px] w-[3px] shrink-0 border-x border-[#d3d7e3]" />
        <div className="flex w-[1070px] shrink-0">
          {standardTools.map(([name, flyout]) => <Tool key={name} name={name} flyout={flyout} />)}
        </div>
        <div className="mr-[2px] flex w-[8px] shrink-0 border-l border-[#d3d7e3] pl-[6px]">
          <div className="w-[3px] border-x border-[#d3d7e3]" />
        </div>
        <div className="flex pl-px">
          {cplaneTools.map((group, g) => (
            <div key={g} className="flex">
              {g > 0 && <div className="mx-[2px] h-7 w-[2px] border-l border-[#c8cad0]" />}
              {group.map((name) => <Tool key={name} name={name} active={name === 'Origin'} />)}
            </div>
          ))}
        </div>
      </div>

      {/* Command line */}
      <div className="flex pt-[2px] pl-[3px]">
        <div className="mr-px w-[3px] border-x border-[#c3c9dc]" />
        <div className="flex-1 text-xs">
          <div className="flex h-[30px] border-b border-[#b4bedb] bg-white">
            <div className="flex-1 pl-px leading-[15px] whitespace-pre">
              <p>Drag a window to zoom ( All  Dynamic  Extents  Factor  In  Out  Selected  Target  1To1 ): _All</p>
              <p>Choose option ( Extents  Selected  1To1 ): _Extents</p>
            </div>
            <div className="w-[17px] bg-[#f0f0f0]" />
          </div>
          <div className="flex h-[18px] items-center bg-white pl-px">
            <label htmlFor="command" className="font-bold">Command:</label>
            <input id="command" className="flex-1 pl-1 outline-none" />
            <div className="flex w-[17px] flex-col items-center gap-px bg-[#f0f0f0]">
              <button aria-label="Previous" className="flex h-2 w-3 items-center justify-center border border-[#ccc] bg-white">
                <svg viewBox="0 0 6 5" className="h-[5px] w-[6px]"><path d="M0 5h6L3 0z" /></svg>
              </button>
              <button aria-label="Next" className="flex h-2 w-3 items-center justify-center border border-[#ccc] bg-white">
                <svg viewBox="0 0 6 5" className="h-[5px] w-[6px]"><path d="M0 0h6L3 5z" /></svg>
              </button>
            </div>
          </div>
        </div>
      </div>

      {/* Work area */}
      <main className="flex flex-1 pt-[7px]">
        <div className="w-[65px] shrink-0">
          <div className="mt-[3px] mr-[5px] ml-[3px] h-[3px] border-y border-[#c3c9dc]" />
          <div className="mt-[2px] ml-px grid w-14 grid-cols-2">
            {sideTools.map((name) => <Tool key={name} name={name} flyout={!noFlyout.includes(name)} />)}
          </div>
        </div>

        <div className="flex min-w-0 flex-1 flex-col">
          <Viewport />
          <div className="mb-[5px] flex h-5 text-xs">
            {viewTabs.map((tab) => (
              <button
                key={tab}
                className={
                  tab === 'Right'
                    ? 'rounded-b border-r border-b border-[#bcc4dc] bg-[#f3f4f7] pt-[3px] pr-[2px] pl-2 [clip-path:polygon(0_0,100%_0,100%_100%,8px_100%,0_60%)]'
                    : 'rounded-b border-r border-b border-[#bcc4dc] bg-[#dadada] pt-[3px] pr-[2px] pl-2 [clip-path:polygon(0_0,100%_0,100%_100%,8px_100%,0_60%)]'
                }
              >
                {tab}
              </button>
            ))}
            <button aria-label="New viewport" className="flex w-[27px] items-center justify-center rounded-b border-r border-b border-[#bcc4dc] pt-[3px]">
              <svg viewBox="0 0 10 10" className="size-[10px]" fill="#fff" stroke="#555"><path d="M3.500.5h3v3h3v3h-3v3h-3v-3h-3v-3h3z" /></svg>
            </button>
          </div>
        </div>

        <PropertiesPanel />
      </main>

      <OsnapBar />
      <StatusBar />
      <Taskbar />
    </div>
  )
}
